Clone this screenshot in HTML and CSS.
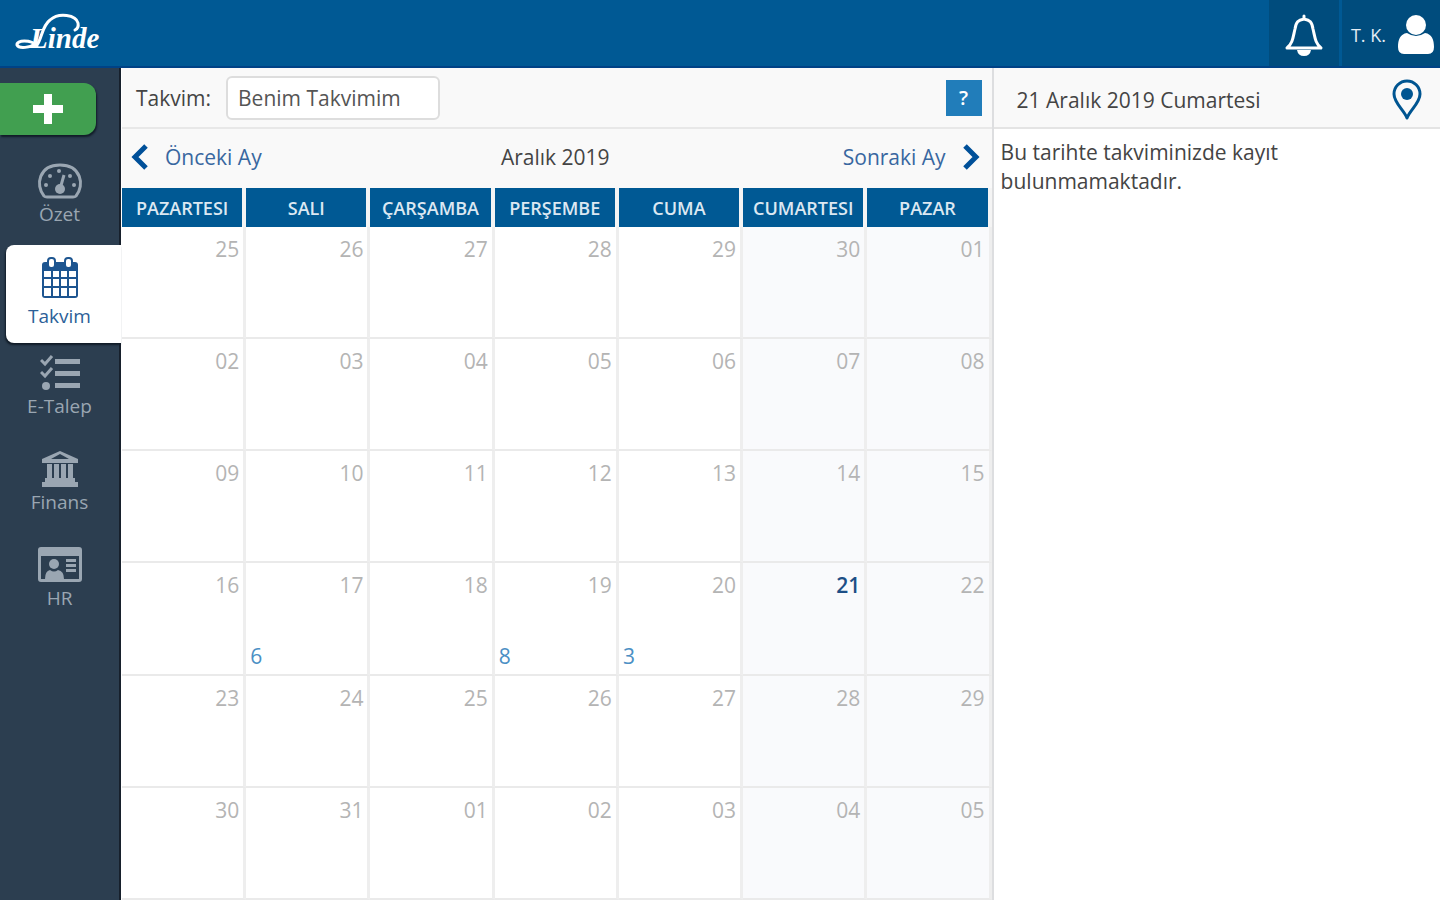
FILE: index.html
```html
<!DOCTYPE html>
<html lang="tr">

<head>
	<meta charset="utf-8">
	<title>Takvim</title>
	<meta name="viewport" content="width=device-width, initial-scale=1">
	<link rel="stylesheet" href="styles.css">
</head>

<body>
	<header class="topbar">
		<a class="logo" href="#" aria-label="Linde">
			<svg width="92" height="42" viewBox="0 0 92 42">
				<text x="17" y="36" class="logo-text">Linde</text>
				<path d="M24 33C29 26 29 14 37 8C46 0 63 3 65 11Q66 16 62 18M24 34C18 27 3 28 4 33C6 37 17 36 24 31" />
			</svg>
		</a>
		<div class="topbar-right">
			<button class="top-button bell" aria-label="Bildirimler">
				<svg width="40" height="44" viewBox="0 0 40 44">
					<path d="M20 3v3M3 35C9 30 9 24 11 16C12 9 14 7 20 6C26 7 28 9 29 16C31 24 31 30 37 35Z" fill="none" stroke="#fff" stroke-width="3" stroke-linejoin="round" stroke-linecap="round" />
					<path d="M13 37h14q-1 6-7 6t-7-6z" fill="#fff" />
				</svg>
			</button>
			<button class="top-button user">
				<span>T. K.</span>
				<svg width="36" height="40" viewBox="0 0 36 40">
					<path d="M9 18C2 19 0 25 0 32Q0 39 6 39H30Q36 39 36 32C36 25 34 19 27 18Q18 24 9 18Z" fill="#fff" />
					<circle cx="18" cy="10" r="10" fill="#fff" />
				</svg>
			</button>
		</div>
	</header>

	<div class="page">
		<nav class="sidebar">
			<button class="add" aria-label="Ekle">
				<svg width="30" height="30" viewBox="0 0 30 30">
					<path d="M15 0v30M0 15h30" stroke="#fff" stroke-width="8" />
				</svg>
			</button>
			<a class="nav-item" href="#">
				<svg width="46" height="36" viewBox="0 0 46 36">
					<path d="M7 33C-2 22 2 2 23 2S48 22 39 33Q38 34 36 34H10Q8 34 7 33Z" fill="none" stroke="currentColor" stroke-width="3" />
					<path d="M23 26L27 12" stroke="currentColor" stroke-width="3" />
					<circle cx="23" cy="26" r="5" />
					<circle cx="9" cy="22" r="2" />
					<circle cx="13" cy="13" r="2" />
					<circle cx="22" cy="8" r="2" />
					<circle cx="33" cy="13" r="2" />
					<circle cx="37" cy="22" r="2" />
				</svg>
				<span>Özet</span>
			</a>
			<a class="nav-item active" href="#">
				<svg width="38" height="42" viewBox="0 0 38 42">
					<path d="M4 5H34Q37 5 37 8V38Q37 41 34 41H4Q1 41 1 38V8Q1 5 4 5Z" fill="#1d5590" />
					<path d="M3 14h7v6H3zM12 14h6v6h-6zM20 14h6v6h-6zM28 14h7v6h-7zM3 22h7v7H3zM12 22h6v7h-6zM20 22h6v7h-6zM28 22h7v7h-7zM3 31h7v8H3zM12 31h6v8h-6zM20 31h6v8h-6zM28 31h7v8h-7z" fill="#fff" />
					<rect x="7" y="1" width="7" height="10" rx="3" fill="#fff" stroke="#1d5590" stroke-width="2" />
					<rect x="24" y="1" width="7" height="10" rx="3" fill="#fff" stroke="#1d5590" stroke-width="2" />
				</svg>
				<span>Takvim</span>
			</a>
			<a class="nav-item" href="#">
				<svg width="40" height="36" viewBox="0 0 40 36">
					<path d="M1 5l4 4 7-8M1 17l4 4 7-8" fill="none" stroke="currentColor" stroke-width="3" />
					<circle cx="6" cy="31" r="4" />
					<path d="M15 4h25v5H15zM15 16h25v5H15zM15 28h25v5H15z" />
				</svg>
				<span>E-Talep</span>
			</a>
			<a class="nav-item" href="#">
				<svg width="38" height="36" viewBox="0 0 38 36">
					<path d="M19 0L37 8V12H1V8ZM19 3L10 8H28Z" fill-rule="evenodd" />
					<path d="M6 13h5v14H6zM13 13h5v14h-5zM20 13h5v14h-5zM27 13h5v14h-5zM4 27h30v4H4zM1 31h36v5H1z" />
				</svg>
				<span>Finans</span>
			</a>
			<a class="nav-item" href="#">
				<svg width="46" height="36" viewBox="0 0 46 36">
					<path d="M4 0H42Q45 0 45 3V32Q45 35 42 35H4Q1 35 1 32V3Q1 0 4 0ZM4 9V32H42V9Z" fill-rule="evenodd" />
					<circle cx="17" cy="17" r="5" />
					<path d="M8 32Q8 24 13 23Q17 26 21 23Q27 24 27 32ZM29 12h10v3H29zM29 17h10v3H29zM29 22h10v3H29z" />
				</svg>
				<span>HR</span>
			</a>
		</nav>

		<main class="calendar">
			<div class="filter">
				<label for="calendar-name">Takvim:</label>
				<select id="calendar-name">
					<option>Benim Takvimim</option>
				</select>
				<button class="help">?</button>
			</div>
			<div class="month-nav">
				<a href="#">
					<svg width="18" height="26" viewBox="0 0 18 26">
						<path d="M15 2L4 13L15 24" />
					</svg>
					Önceki Ay
				</a>
				<h1>Aralık 2019</h1>
				<a class="next" href="#">
					Sonraki Ay
					<svg width="18" height="26" viewBox="0 0 18 26">
						<path d="M3 2L14 13L3 24" />
					</svg>
				</a>
			</div>
			<table class="month">
				<thead>
					<tr>
						<th>PAZARTESI</th>
						<th>SALI</th>
						<th>ÇARŞAMBA</th>
						<th>PERŞEMBE</th>
						<th>CUMA</th>
						<th>CUMARTESI</th>
						<th>PAZAR</th>
					</tr>
				</thead>
				<tbody>
					<tr>
						<td>25</td>
						<td>26</td>
						<td>27</td>
						<td>28</td>
						<td>29</td>
						<td>30</td>
						<td>01</td>
					</tr>
					<tr>
						<td>02</td>
						<td>03</td>
						<td>04</td>
						<td>05</td>
						<td>06</td>
						<td>07</td>
						<td>08</td>
					</tr>
					<tr>
						<td>09</td>
						<td>10</td>
						<td>11</td>
						<td>12</td>
						<td>13</td>
						<td>14</td>
						<td>15</td>
					</tr>
					<tr>
						<td>16</td>
						<td>17<a class="count" href="#">6</a></td>
						<td>18</td>
						<td>19<a class="count" href="#">8</a></td>
						<td>20<a class="count" href="#">3</a></td>
						<td class="today">21</td>
						<td>22</td>
					</tr>
					<tr>
						<td>23</td>
						<td>24</td>
						<td>25</td>
						<td>26</td>
						<td>27</td>
						<td>28</td>
						<td>29</td>
					</tr>
					<tr>
						<td>30</td>
						<td>31</td>
						<td>01</td>
						<td>02</td>
						<td>03</td>
						<td>04</td>
						<td>05</td>
					</tr>
				</tbody>
			</table>
		</main>

		<aside class="detail">
			<div class="detail-head">
				<h2>21 Aralık 2019 Cumartesi</h2>
				<button class="pin" aria-label="Konum">
					<svg width="32" height="42" viewBox="0 0 32 42">
						<path d="M16 39C13 31 3 24 3 15A13 13 0 0 1 29 15C29 24 19 31 16 39Z" fill="none" stroke="#005591" stroke-width="3" stroke-linejoin="round" />
						<circle cx="16" cy="15" r="6" fill="#005591" />
					</svg>
				</button>
			</div>
			<p>Bu tarihte takviminizde kayıt bulunmamaktadır.</p>
		</aside>
	</div>
</body>

</html>
```
FILE: styles.css
```css
* {
	box-sizing: border-box;
}

body {
	margin: 0;
	min-height: 100vh;
	display: flex;
	flex-direction: column;
	font-family: "Open Sans", "Noto Sans", sans-serif;
	font-size: 21px;
	color: #444;
	background: #fff;
}

a {
	text-decoration: none;
}

button {
	border: none;
	padding: 0;
	font-family: inherit;
	cursor: pointer;
}

svg {
	display: block;
	flex: none;
}

h1,
h2 {
	margin: 0;
	font-size: 21px;
	font-weight: normal;
}

.topbar {
	display: flex;
	justify-content: space-between;
	height: 68px;
	background: #005994;
	border-bottom: 2px solid #004286;
}

.logo {
	padding: 12px 0 0 13px;
}

.logo-text {
	font-family: "Liberation Serif", serif;
	font-size: 29px;
	font-weight: bold;
	font-style: italic;
	fill: #fff;
}

.logo path {
	fill: none;
	stroke: #fff;
	stroke-width: 3;
	stroke-linecap: round;
}

.topbar-right {
	display: flex;
	background: #004c7d;
}

.top-button {
	display: flex;
	align-items: center;
	justify-content: center;
	padding-top: 4px;
	background: #004c7d;
	color: #e4edf4;
	font-size: 18px;
}

.bell {
	width: 73px;
	border-right: 3px solid #005994;
}

.user {
	gap: 12px;
	padding-left: 9px;
	padding-right: 6px;
}

.page {
	flex: 1;
	display: flex;
}

.sidebar {
	flex: none;
	width: 121px;
	padding-top: 15px;
	background: #2c3e50;
	border-right: 2px solid #17202c;
}

.add {
	display: flex;
	align-items: center;
	justify-content: center;
	width: 96px;
	height: 52px;
	margin-bottom: 14px;
	background: #419f50;
	border-radius: 0 12px 12px 0;
	box-shadow: 1px 2px 2px #111c28;
}

.nav-item {
	display: flex;
	flex-direction: column;
	align-items: center;
	height: 96px;
	padding-top: 14px;
	color: #9aa6b2;
	font-size: 19px;
	line-height: 30px;
}

.nav-item svg {
	fill: currentColor;
}

.nav-item.active {
	height: 98px;
	margin: 0 -2px 0 6px;
	padding: 12px 8px 0 0;
	background: #fff;
	border-radius: 8px 0 0 8px;
	box-shadow: -1px 2px 2px #111c28;
	color: #2c5f98;
}

.nav-item.active span {
	line-height: 34px;
}

.nav-item.active ~ .nav-item {
	padding-top: 12px;
}

.calendar {
	flex: 1;
	display: flex;
	flex-direction: column;
	padding-left: 1px;
	border-right: 2px solid #dddee0;
}

.filter {
	display: flex;
	align-items: center;
	height: 61px;
	padding: 0 10px 0 14px;
	background: #f9f9f9;
	border-bottom: 2px solid #e8e8e8;
}

.filter select {
	appearance: none;
	width: 214px;
	height: 44px;
	margin-left: 15px;
	padding: 0 10px;
	background: #fff;
	border: 2px solid #ddd;
	border-radius: 6px;
	color: #555;
	font-family: inherit;
	font-size: 21px;
}

.help {
	width: 36px;
	height: 36px;
	margin-left: auto;
	background: #217dba;
	color: #fff;
	font-size: 20px;
	font-weight: 600;
}

.month-nav {
	display: grid;
	grid-template-columns: 1fr auto 1fr;
	align-items: center;
	height: 59px;
	padding: 0 12px 4px 9px;
	background: #f9f9f9;
}

.month-nav a {
	display: flex;
	align-items: center;
	gap: 16px;
	color: #3867a0;
}

.month-nav .next {
	justify-content: flex-end;
}

.month-nav path {
	fill: none;
	stroke: #005099;
	stroke-width: 5;
}

.month {
	flex: 1;
	width: 100%;
	table-layout: fixed;
	border-collapse: separate;
	border-spacing: 0;
}

.month th {
	height: 39px;
	padding: 0;
	background: #005994;
	border-right: 4px solid #f4f4f4;
	color: #dce8f2;
	font-size: 18px;
	font-weight: 600;
}

.month td {
	position: relative;
	padding: 7px 4px 0;
	border-right: 3px solid #eee;
	border-bottom: 2px solid #eaeaea;
	color: #b4b4b4;
	line-height: 30px;
	text-align: right;
	vertical-align: top;
}

.month td:nth-child(n+6) {
	background: #f9fafc;
}

.month .today {
	color: #1d4f86;
	font-weight: 600;
}

.count {
	position: absolute;
	left: 4px;
	bottom: 3px;
	color: #4b8fc4;
}

.detail {
	width: 31%;
}

.detail-head {
	display: flex;
	align-items: center;
	justify-content: space-between;
	height: 61px;
	padding: 4px 17px 0 23px;
	background: #f9f9f9;
	border-bottom: 2px solid #e4e4e4;
}

.pin {
	background: none;
}

.detail p {
	max-width: 340px;
	margin: 0;
	padding: 9px 7px;
	line-height: 29px;
}
```
